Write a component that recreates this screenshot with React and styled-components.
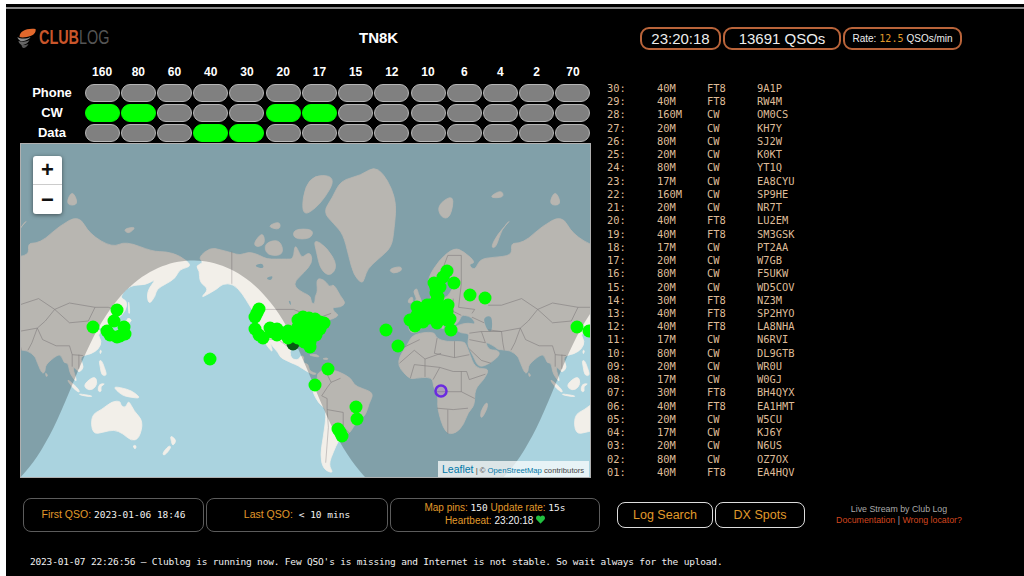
import React from 'react';
import styled, { createGlobalStyle } from 'styled-components';
import { FaHeart } from 'react-icons/fa';

const BANDS = ['160', '80', '60', '40', '30', '20', '17', '15', '12', '10', '6', '4', '2', '70'];
const MODES = [
  { name: 'Phone', on: [] },
  { name: 'CW', on: ['160', '80', '20', '17'] },
  { name: 'Data', on: ['40', '30'] },
];

const LOG = [
  ['30', '40M', 'FT8', '9A1P'], ['29', '40M', 'FT8', 'RW4M'], ['28', '160M', 'CW', 'OM0CS'],
  ['27', '20M', 'CW', 'KH7Y'], ['26', '80M', 'CW', 'SJ2W'], ['25', '20M', 'CW', 'K0KT'],
  ['24', '80M', 'CW', 'YT1Q'], ['23', '17M', 'CW', 'EA8CYU'], ['22', '160M', 'CW', 'SP9HE'],
  ['21', '20M', 'CW', 'NR7T'], ['20', '40M', 'FT8', 'LU2EM'], ['19', '40M', 'FT8', 'SM3GSK'],
  ['18', '17M', 'CW', 'PT2AA'], ['17', '20M', 'CW', 'W7GB'], ['16', '80M', 'CW', 'F5UKW'],
  ['15', '20M', 'CW', 'WD5COV'], ['14', '30M', 'FT8', 'NZ3M'], ['13', '40M', 'FT8', 'SP2HYO'],
  ['12', '40M', 'FT8', 'LA8NHA'], ['11', '17M', 'CW', 'N6RVI'], ['10', '80M', 'CW', 'DL9GTB'],
  ['09', '20M', 'CW', 'WR0U'], ['08', '17M', 'CW', 'W0GJ'], ['07', '30M', 'FT8', 'BH4QYX'],
  ['06', '40M', 'FT8', 'EA1HMT'], ['05', '20M', 'CW', 'W5CU'], ['04', '17M', 'CW', 'KJ6Y'],
  ['03', '20M', 'CW', 'N6US'], ['02', '80M', 'CW', 'OZ7OX'], ['01', '40M', 'FT8', 'EA4HQV'],
];

// map projection, numbers fitted to the screenshot (origin = map top left)
const WORLD = 483;
const px = (lon) => 401 + lon * (WORLD / 360);
const py = (lat) => 242 - (WORLD / (2 * Math.PI)) * Math.log(Math.tan(Math.PI / 4 + (lat * Math.PI) / 360));
const toLine = (pts) =>
  'M' + pts.map(([lon, lat]) => `${px(lon).toFixed(1)} ${py(lat).toFixed(1)}`).join('L');

// closed coast with rounded corners, goes through the midpoints of the edges
const toCoast = (pts) => {
  const xy = pts.map(([lon, lat]) => [px(lon), py(lat)]);
  const mid = (a, b) => `${((a[0] + b[0]) / 2).toFixed(1)} ${((a[1] + b[1]) / 2).toFixed(1)}`;
  let d = `M${mid(xy[xy.length - 1], xy[0])}`;
  xy.forEach((p, i) => {
    d += `Q${p[0].toFixed(1)} ${p[1].toFixed(1)} ${mid(p, xy[(i + 1) % xy.length])}`;
  });
  return d + 'Z';
};

const LAND = [
  // north america
  [[-168,66],[-162,67],[-166,68.5],[-157,71],[-150,70.5],[-141,69.7],[-135,69],[-128,70],[-120,69],[-115,68],[-108,68],[-100,68],[-95,68],[-94,72],[-90,69],[-88,68.5],[-85,69.5],[-82,69.5],[-81,67],[-87,64],[-94,61],[-94,58.7],[-88,56.5],[-82,55],[-82,52],[-79,51.5],[-79,55],[-77,57],[-78,62],[-72,61.5],[-68,58.5],[-65,60],[-60,55],[-56,52],[-60,50],[-66,50],[-65,48],[-61,46],[-66,44],[-70,43.5],[-71,41.5],[-74,40.5],[-76,37],[-76,35],[-81,31.5],[-80,27],[-81,25],[-83,29],[-89,30],[-94,29.5],[-97.5,26],[-97.5,21],[-95,18.5],[-91,18.5],[-90,21.3],[-87,21],[-88,16],[-84,15.5],[-83.5,11],[-80,9],[-77.5,8.5],[-80,7.5],[-85,10],[-92,14.5],[-96,16],[-105,20],[-106,23],[-112,29],[-113,31.5],[-110,23],[-115,28],[-117.5,33],[-121,35],[-124,40],[-124,47],[-128,51],[-133,56],[-140,60],[-148,60],[-152,58],[-160,55.5],[-164,54.5],[-158,58],[-165,60.5],[-165,64.5]],
  // south america
  [[-77.5,8.5],[-72,12],[-62,10.5],[-52,5],[-50,0],[-44,-2.5],[-35,-6],[-39,-14],[-41,-22],[-48,-26],[-53,-34],[-58,-35],[-62,-39],[-65,-44],[-69,-51],[-65,-55],[-73,-53],[-75,-46],[-73,-37],[-70,-18],[-76,-14],[-81,-5],[-80,1],[-77,4]],
  // greenland + arctic islands
  [[-73,78],[-66,80],[-60,82],[-45,82.5],[-32,83.5],[-18,80],[-20,75],[-22,71],[-32,68],[-40,65],[-42,62],[-44,60],[-50,63],[-54,69],[-58,74],[-65,76]],
  [[-80,73],[-70,71],[-62,66],[-68,62.5],[-75,65],[-78,70]],
  [[-117,72],[-105,73],[-102,69],[-115,69]],
  [[-90,77],[-75,79],[-62,82.5],[-85,82.5]],
  [[-125,72],[-118,74.5],[-116,72],[-122,71]],
  [[-95,75],[-80,75],[-82,73],[-95,73]],
  [[-115,75.5],[-105,76.5],[-105,74.8]],
  // eurasia
  [[-9,37],[-9,43.5],[-1.5,43.5],[-1,46],[-4.5,48.5],[2,51],[8,54],[8,57],[10.5,57.5],[10,54],[14,54],[20,54.5],[24,59],[30,60],[23,60],[21,63],[25,65.5],[22,65.8],[17,61],[18,59],[15,56],[13,55.5],[11,59],[6,58],[5,62],[14,68],[25,71],[32,70],[41,67],[35,66.5],[40,64.5],[44,68],[54,68.5],[68,69],[67,72],[73,72],[80,73],[90,75.5],[105,77.5],[113,74],[130,71],[140,72.5],[160,70],[170,70],[180,69],[190,66],[180,65],[177,62],[170,60],[163,58],[162,55],[157,51],[155.5,57],[163,62],[155,59.5],[143,59.5],[135,54.5],[141,53],[140,48],[132,43],[128,40],[129.5,36],[126.5,34.5],[126,37.5],[125,39.5],[121,39],[118,39],[122,37],[119,35],[122,31],[120,26],[114,22.5],[108,21.5],[106,19],[109,13],[105,9],[103,12],[100,13.5],[104,1.5],[100,6],[98,10],[97,16.5],[94,16],[92,21.5],[89,22],[80,15],[80,10],[77.5,8],[73,19],[72,21],[67,25],[57,25.5],[56,27],[50,30],[48,30],[51,25],[56,25.5],[59.5,22.5],[52,16],[43,12.7],[39,21],[35,28],[35,31],[36,36],[30,36],[26,38],[26,40],[29,41],[35,42],[41,41],[38,45],[33,46],[30,46],[28,42],[24,40.5],[23,37],[20,40],[19,42],[14,45],[12.5,44],[18,40],[16,38],[12,42],[8,44],[3,43],[0,39],[-2,37],[-5,36]],
  // africa
  [[-6,35.5],[10,37],[11,33],[19,30.5],[32,31],[34,28],[37,21],[39,15.5],[43,12],[51,12],[47,4],[40,-3],[40,-15],[35,-20],[32,-28],[26,-34],[18,-34],[12,-17],[13,-8],[9,-1],[9,4],[5,6],[-4,5],[-8,4.5],[-13,9],[-17,14.5],[-16,21],[-10,29]],
  // australia and the islands
  [[114,-22],[122,-18],[130,-12],[136,-12],[136,-15],[140,-17],[142,-11],[146,-19],[153,-26],[150,-37],[144,-38.5],[138,-34],[131,-31.5],[124,-33],[115,-34.5]],
  [[145,-41],[148,-41],[147,-43.5]],
  [[173,-35],[178,-38],[175,-41.5],[174,-39]],
  [[172,-41],[174,-42],[169,-46.5],[167,-45.5]],
  [[131,-1],[141,-3],[147,-6],[151,-10],[143,-9],[138,-8],[133,-4]],
  [[109,1],[117,7],[119,1],[115,-4],[110,-3]],
  [[95,5.5],[104,-2],[106,-6],[101,-3]],
  [[105,-6.5],[115,-8],[114,-8.8],[106,-7.5]],
  [[120,1],[125,1],[121,-1],[122,-5],[119,-5]],
  [[120,18],[122,18],[124,13],[126,7],[122,7],[121,13]],
  [[130,33],[136,34],[141,36],[141,41],[145,43.5],[141,45],[140,41],[136,36.5],[131,34]],
  [[142,54],[143,47],[142,47]],
  [[120.5,25],[122,25],[121,22]],
  [[80,9.5],[82,7],[80.5,6]],
  [[49,-12],[50,-16],[45,-25],[44,-20]],
  [[-5,50],[1,51],[0,53.5],[-2,56],[-3,58.5],[-6,57],[-3,54],[-5,52]],
  [[-10,52],[-6,52],[-6,55],[-9,54]],
  [[-24,65],[-15,66],[-14,64.5],[-21,63.5]],
  [[12,79],[25,80.5],[22,77],[15,77]],
  [[52,71],[57,74],[68,77],[60,75],[56,71]],
  [[50,80],[60,81],[62,80]],
  [[95,79],[105,79],[100,81]],
  [[138,75],[148,75.5],[142,74]],
  [[-85,22],[-75,20],[-78,22.5]],
  [[-74,19],[-69,18.5],[-70,20]],
];

const LAKES = [
  [[47,45],[53,46],[53,37],[50,37],[47,42]],
  [[-92,47],[-84,47],[-80,44],[-76,44],[-82,42],[-87,42],[-85,46]],
  [[-125,66],[-118,67],[-117,65]],
  [[-116,62],[-110,63],[-112,61]],
  [[-99,53],[-97,53],[-97,50.5]],
];

const BORDERS = [
  [[-123,49],[-95,49],[-84,46],[-75,45],[-67,47]], [[-141,70],[-141,60]], [[-117,32.5],[-106,31.7],[-97,26]],
  [[-13,27],[-1,32]], [[12,33],[10,23],[25,20],[25,31]], [[25,20],[36,22]], [[-16,16],[-5,25],[3,19],[15,23]],
  [[3,6],[3,19]], [[14,13],[9,4]], [[14,13],[24,10],[34,10],[36,4],[48,8]], [[12,-5],[30,-5],[40,-10]],
  [[12,-17],[24,-18],[35,-17]], [[20,-18],[20,-34]], [[30,-5],[30,10]], [[-8,5],[-5,15],[14,13]],
  [[-70,-18],[-58,-20],[-58,-30],[-53,-34]], [[-70,-18],[-70,-10],[-74,-8],[-70,-2],[-67,2],[-60,5]],
  [[-70,-18],[-69,-30],[-71,-50]], [[-72,12],[-67,2]],
  [[-2,43],[3,42.5],[3,51]], [[7,47],[8,54]], [[14,54],[13,48],[24,48],[30,46]], [[24,54],[24,48]],
  [[30,60],[28,50],[40,49],[38,47]], [[20,69],[30,69],[30,60]], [[12,60],[20,69]],
  [[50,51],[60,51],[75,54],[87,49],[98,52],[117,50],[127,50],[135,48]], [[87,49],[80,43],[74,39],[78,32],[88,28],[98,28],[100,22],[108,21.5]],
  [[87,49],[98,42],[112,43],[117,50]], [[50,38],[60,37],[74,39]], [[48,30],[45,37],[60,37],[61,30],[62,25]],
  [[74,39],[70,30],[67,25]], [[36,36],[45,37]], [[38,45],[47,42]], [[36,32],[48,30]], [[52,16],[45,18],[36,26]],
  [[125,39.5],[130,43]], [[100,22],[100,13.5]], [[105,22],[105,12]],
];

const PINS = [
  [117,310],[114,321],[93,327],[107,331],[110,335],[117,337],[124,327],[125,334],[120,336],[210,359],
  [259,309],[255,317],[257,313],[255,329],[259,335],[263,338],[270,328],[277,329],[277,335],[272,332],[288,338],[288,331],
  [298,320],[303,317],[309,318],[315,319],[320,322],[324,323],[298,327],[304,324],[310,325],[316,326],[320,329],
  [296,333],[302,331],[308,332],[314,332],[298,338],[305,337],[311,338],[316,335],[310,347],[304,342],[310,342],
  [328,369],[315,385],[356,407],[357,419],[338,429],[340,432],[342,436],[386,330],[398,346],
  [447,271],[443,277],[434,283],[454,283],[470,295],[485,298],[436,293],[440,287],[436,288],[438,297],[417,307],[427,305],[448,305],[422,310],
  [410,320],[415,326],[423,322],[437,323],[450,319],[451,330],[443,313],[433,310],[417,315],[437,300],[433,317],[447,320],[443,307],[424,314],
  [430,305],[437,306],[440,312],[447,312],[429,318],[436,316],[418,321],[428,312],
  [577,327],[589,331],
].map(([x, y]) => [x - 20, y - 143]);

// night side from the sun position at the time of the picture
const nightShape = () => {
  const pts = [];
  for (let lon = -316; lon <= 172; lon += 3) {
    const lat = (Math.atan(Math.cos(((lon + 170) * Math.PI) / 180) / 0.412) * 180) / Math.PI;
    pts.push(`${px(lon).toFixed(1)} ${py(Math.max(lat, -80)).toFixed(1)}`);
  }
  return `M-20 -10L${pts.join('L')}L640 -10Z`;
};

const GlobalStyle = createGlobalStyle`
  html, body { margin: 0; padding: 0; background: #fff; overflow: hidden; }
  body { padding: 4px 0 0 6px; font-family: "Liberation Sans", Arial, sans-serif; }
`;

const Page = styled.div`
  background: #000;
  height: 572px;
  padding-top: 3px;
  box-sizing: border-box;
  color: #fff;
`;

const Rule = styled.div`
  height: 2px;
  background: #8a8a8a;
`;

const Main = styled.div`
  display: flex;
  padding-left: 14px;
`;

const LeftColumn = styled.div`
  width: 571px;
`;

const RightColumn = styled.div`
  margin-left: 16px;
`;

const Header = styled.div`
  height: 55px;
  display: flex;
  align-items: center;
  padding-top: 2px;
  box-sizing: border-box;
`;

const Logo = styled.div`
  display: flex;
  align-items: center;
  gap: 2px;
  width: 289px;
  margin-left: -3px;
`;

const LogoText = styled.span`
  display: inline-block;
  font-size: 20px;
  font-weight: 700;
  color: #555;
  transform: scaleX(0.72);
  transform-origin: left center;
  white-space: nowrap;
  b { color: #c9562b; font-weight: 700; }
  i { font-style: normal; font-weight: 400; }
`;

const Title = styled.div`
  font-size: 15px;
  font-weight: 700;
  margin-left: 53px;
`;

const BandGrid = styled.div`
  display: grid;
  grid-template-columns: 64px repeat(14, 1fr);
  grid-auto-rows: 18px;
  row-gap: 2px;
  align-items: center;
  justify-items: center;
  margin-bottom: 1px;
`;

const BandLabel = styled.div`
  font-size: 12px;
  font-weight: 700;
  line-height: 14px;
  margin-bottom: 2px;
`;

const ModeLabel = styled.div`
  font-size: 13px;
  font-weight: 700;
  color: #fff;
  margin-bottom: 1px;
`;

const Pill = styled.div`
  width: 35px;
  height: 18px;
  box-sizing: border-box;
  border-radius: 9px;
  background: ${(p) => (p.$on ? '#00ff00' : '#808080')};
  border: 1px solid ${(p) => (p.$on ? '#00ff00' : '#b5b5b5')};
`;

const MapFrame = styled.div`
  position: relative;
  width: 571px;
  height: 335px;
  box-sizing: border-box;
  border: 1px solid #b0b0b0;
  overflow: hidden;
  background: #aad3df;
`;

const MapCanvas = styled.svg`
  display: block;
`;

const ZoomBox = styled.div`
  position: absolute;
  left: 12px;
  top: 12px;
  width: 29px;
  background: #fff;
  border-radius: 3px;
  box-shadow: 0 1px 4px rgba(0, 0, 0, 0.5);
`;

const ZoomButton = styled.div`
  height: 29px;
  box-sizing: border-box;
  display: flex;
  align-items: center;
  justify-content: center;
  font-size: 22px;
  font-weight: 700;
  color: #111;
  border-bottom: ${(p) => (p.$first ? '1px solid #ccc' : 'none')};
`;

const Attribution = styled.div`
  position: absolute;
  right: 1px;
  bottom: 0;
  width: 151px;
  box-sizing: border-box;
  padding-left: 4px;
  height: 16px;
  line-height: 16px;
  background: rgba(255, 255, 255, 0.72);
  font-size: 7.7px;
  color: #444;
  white-space: nowrap;
  b { font-weight: 400; font-size: 10.5px; color: #0078a8; }
  u { text-decoration: none; color: #0078a8; }
`;

const Pills = styled.div`
  display: flex;
  gap: 2px;
  margin: 18px 0 0 33px;
  height: 55px;
`;

const ClockPill = styled.div`
  height: 23px;
  width: ${(p) => p.$w}px;
  box-sizing: border-box;
  border: 2px solid #b9643a;
  border-radius: 9px;
  display: flex;
  align-items: center;
  justify-content: center;
  font-size: ${(p) => p.$size || 15}px;
  color: #eee;
  white-space: nowrap;
`;

const Amber = styled.span`
  color: #e09a2b;
  font-family: ${(p) => (p.$mono ? '"DejaVu Sans Mono", monospace' : 'inherit')};
  margin: ${(p) => p.$m || '0'};
`;

const LogList = styled.div`
  font-family: "DejaVu Sans Mono", monospace;
  font-size: 10.4px;
  color: #dfbc98;
`;

const LogRow = styled.div`
  display: grid;
  grid-template-columns: 50px 50px 50px 1fr;
  height: 13.24px;
  line-height: 13.24px;
  white-space: nowrap;
`;

const Footer = styled.div`
  display: flex;
  align-items: center;
  padding-left: 17px;
  margin-top: 18px;
  height: 35px;
`;

const InfoBox = styled.div`
  width: ${(p) => p.$w}px;
  height: 34px;
  box-sizing: border-box;
  border: 1px solid #5c5c5c;
  border-radius: 8px;
  margin-right: 2px;
  display: flex;
  flex-direction: column;
  align-items: center;
  justify-content: center;
  font-size: ${(p) => p.$size || 10.5}px;
  line-height: 12.5px;
  white-space: pre;
`;

const Mono = styled.span`
  font-family: "DejaVu Sans Mono", monospace;
  font-size: 9.5px;
  color: #f2f2f2;
`;

const Plain = styled.span`
  color: #f2f2f2;
`;

const ActionButton = styled.div`
  width: ${(p) => p.$w}px;
  height: 26px;
  box-sizing: border-box;
  border: 1px solid #ddd;
  border-radius: 8px;
  margin-left: ${(p) => p.$left || 2}px;
  display: flex;
  align-items: center;
  justify-content: center;
  font-size: 12.5px;
  color: #e09a2b;
`;

const Credits = styled.div`
  width: 130px;
  margin-left: 29px;
  text-align: center;
  font-size: 8.8px;
  line-height: 10.5px;
  color: #aaa;
  white-space: nowrap;
`;

const RedText = styled.span`
  color: #d2461f;
`;

const Ticker = styled.div`
  font-family: "DejaVu Sans Mono", monospace;
  font-size: 9.5px;
  letter-spacing: -0.18px;
  color: #f0f0f0;
  padding-left: 24px;
  margin-top: 24px;
  white-space: pre;
`;

const LogoMark = () => (
  <svg width="20" height="20" viewBox="0 0 19 20">
    <path d="M2 9C2 3 9 0 18 1c1 3-2 6-5 7-3 1-8 2-11 1z" fill="#e2682c" />
    <path d="M0 9c3 2 9 2 13 0-1 2-6 5-10 4-2-1-3-3-3-4z" fill="#8a8a8a" />
    <path d="M1 13c3 1 8 1 11-1-1 3-5 5-8 5-2-1-3-3-3-4z" fill="#666" />
    <path d="M4 17c2 0 5 0 7-1-1 2-3 4-5 4-1 0-2-2-2-3z" fill="#555" />
  </svg>
);

const WorldMap = () => {
  const land = LAND.map(toCoast).join('');
  const lakes = LAKES.map(toCoast).join('');
  const borders = BORDERS.map(toLine).join('');
  const world = (
    <>
      <path d={land} fill="#f2efe9" stroke="#f2efe9" strokeWidth="0.8" strokeLinejoin="round" />
      <path d={lakes} fill="#aad3df" />
      <path d={borders} fill="none" stroke="#a9a4a4" strokeWidth="0.6" />
    </>
  );
  return (
    <MapCanvas width="569" height="333" viewBox="1 1 569 333">
      <rect width="571" height="335" fill="#aad3df" />
      {world}
      <g transform={`translate(${-WORLD} 0)`}>{world}</g>
      <path d={nightShape()} fill="#000" fillOpacity="0.24" />
      <circle cx="273" cy="201" r="6.5" fill="#0a5a14" />
      {PINS.map(([x, y], i) => (
        <circle key={i} cx={x} cy={y} r="6.5" fill="#00ff00" />
      ))}
      <circle cx="421" cy="248" r="5.5" fill="#6a2be0" fillOpacity="0.15" stroke="#6a2be0" strokeWidth="2.5" />
    </MapCanvas>
  );
};

export default function App() {
  return (
    <Page>
      <GlobalStyle />
      <Rule />
      <Main>
        <LeftColumn>
          <Header>
            <Logo>
              <LogoMark />
              <LogoText><b>CLUB</b><i>LOG</i></LogoText>
            </Logo>
            <Title>TN8K</Title>
          </Header>
          <BandGrid>
            <span />
            {BANDS.map((b) => <BandLabel key={b}>{b}</BandLabel>)}
            {MODES.map((m) => (
              <React.Fragment key={m.name}>
                <ModeLabel>{m.name}</ModeLabel>
                {BANDS.map((b) => <Pill key={b} $on={m.on.includes(b)} />)}
              </React.Fragment>
            ))}
          </BandGrid>
          <MapFrame>
            <WorldMap />
            <ZoomBox>
              <ZoomButton $first>+</ZoomButton>
              <ZoomButton>−</ZoomButton>
            </ZoomBox>
            <Attribution>
              <b>Leaflet</b> | © <u>OpenStreetMap</u> contributors
            </Attribution>
          </MapFrame>
        </LeftColumn>
        <RightColumn>
          <Pills>
            <ClockPill $w={81}>23:20:18</ClockPill>
            <ClockPill $w={118}>13691 QSOs</ClockPill>
            <ClockPill $w={119} $size={10}>
              Rate:<Amber $mono $m="0 3px">12.5</Amber>QSOs/min
            </ClockPill>
          </Pills>
          <LogList>
            {LOG.map((row) => (
              <LogRow key={row[0]}>
                <span>{row[0]}:</span>
                <span>{row[1]}</span>
                <span>{row[2]}</span>
                <span>{row[3]}</span>
              </LogRow>
            ))}
          </LogList>
        </RightColumn>
      </Main>
      <Footer>
        <InfoBox $w={181}>
          <span><Amber>First QSO: </Amber><Mono>2023-01-06 18:46</Mono></span>
        </InfoBox>
        <InfoBox $w={182}>
          <span><Amber>Last QSO:  </Amber><Mono>{'< 10 mins'}</Mono></span>
        </InfoBox>
        <InfoBox $w={210} $size={10}>
          <span><Amber>Map pins: </Amber><Mono>150</Mono><Amber> Update rate: </Amber><Mono>15s</Mono></span>
          <span><Amber>Heartbeat: </Amber><Plain>23:20:18 </Plain><FaHeart size={9} color="#22c040" /></span>
        </InfoBox>
        <ActionButton $w={96} $left={15}>Log Search</ActionButton>
        <ActionButton $w={90}>DX Spots</ActionButton>
        <Credits>
          Live Stream by Club Log<br />
          <RedText>Documentation</RedText> | <RedText>Wrong locator?</RedText>
        </Credits>
      </Footer>
      <Ticker>2023-01-07 22:26:56 — Clublog is running now. Few QSO's is missing and Internet is not stable. So wait always for the upload.</Ticker>
    </Page>
  );
}
